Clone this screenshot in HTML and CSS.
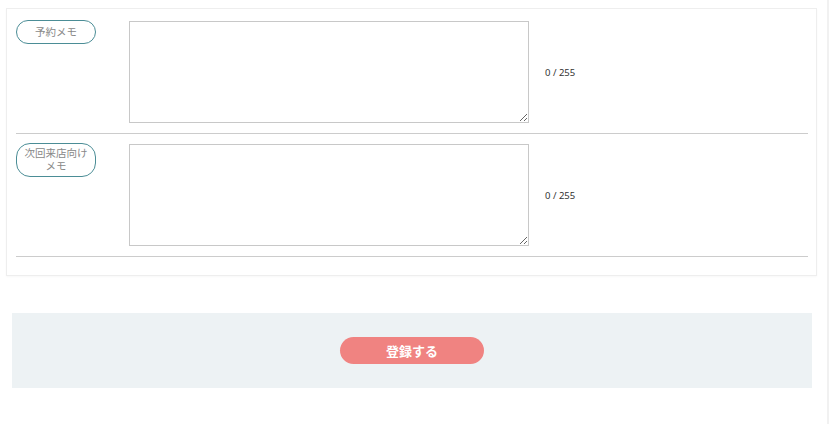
FILE: index.html
```html
<!DOCTYPE html>
<html lang="ja">
  <head>
    <meta charset="UTF-8" />
    <meta name="viewport" content="width=device-width, initial-scale=1.0" />
    <title>予約メモ</title>
    <link rel="stylesheet" href="styles.css">
  </head>
  <body>
    <div class="page">
      <!-- メモ入力エリア -->
      <section class="card">
        <div class="memo-row">
          <div class="memo-label"><span class="pill">予約メモ</span></div>
          <textarea class="memo-input" maxlength="255"></textarea>
          <div class="memo-count">0 / 255</div>
        </div>
        <div class="memo-row">
          <div class="memo-label"><span class="pill">次回来店向け<br>メモ</span></div>
          <textarea class="memo-input" maxlength="255"></textarea>
          <div class="memo-count">0 / 255</div>
        </div>
      </section>

      <!-- 登録ボタン -->
      <div class="submit-area">
        <button class="submit-button">登録する</button>
      </div>
    </div>
  </body>
</html>
```

FILE: styles.css
```css
body {
  font-family: "Noto Sans", "Noto Sans CJK JP", sans-serif;
  margin: 0;
  padding: 0;
  background-color: #fff;
  color: #333;
}

.page {
  width: 829px;
  min-height: 424px;
  box-sizing: border-box;
  border-right: 2px solid #f1f1f1;
  padding-top: 8px;
}

.card {
  width: 811px;
  box-sizing: border-box;
  margin-left: 6px;
  padding: 2px 8px 18px 9px;
  background-color: #fff;
  border: 1px solid #eeeeee;
  box-shadow: 0 1px 2px rgba(0, 0, 0, 0.03);
}

.memo-row {
  display: flex;
  align-items: center;
  padding: 10px 0;
  border-bottom: 1px solid #cccccc;
}

.memo-label {
  width: 113px;
  flex-shrink: 0;
  align-self: flex-start;
}
.pill {
  display: flex;
  align-items: center;
  justify-content: center;
  width: 80px;
  min-height: 24px;
  box-sizing: border-box;
  margin-top: -1px;
  padding: 3px 4px;
  border: 1px solid #4b8d96;
  border-radius: 14px;
  font-size: 10.5px;
  line-height: 13px;
  text-align: center;
  color: #888888;
}

.memo-input {
  display: block;
  width: 400px;
  height: 102px;
  box-sizing: border-box;
  margin: 0;
  padding: 4px;
  border: 1px solid #c8c8c8;
  font-family: inherit;
  font-size: 12px;
  resize: vertical;
}

.memo-count {
  margin-left: 16px;
  font-size: 9.5px;
  color: #333;
}

.submit-area {
  display: flex;
  align-items: center;
  justify-content: center;
  width: 800px;
  height: 75px;
  margin: 37px 0 0 12px;
  background-color: #edf2f4;
}

.submit-button {
  width: 144px;
  height: 27px;
  padding: 0;
  border: none;
  border-radius: 14px;
  background-color: #f08381;
  color: white;
  font-family: inherit;
  font-size: 13px;
  font-weight: bold;
  cursor: pointer;
}
```
